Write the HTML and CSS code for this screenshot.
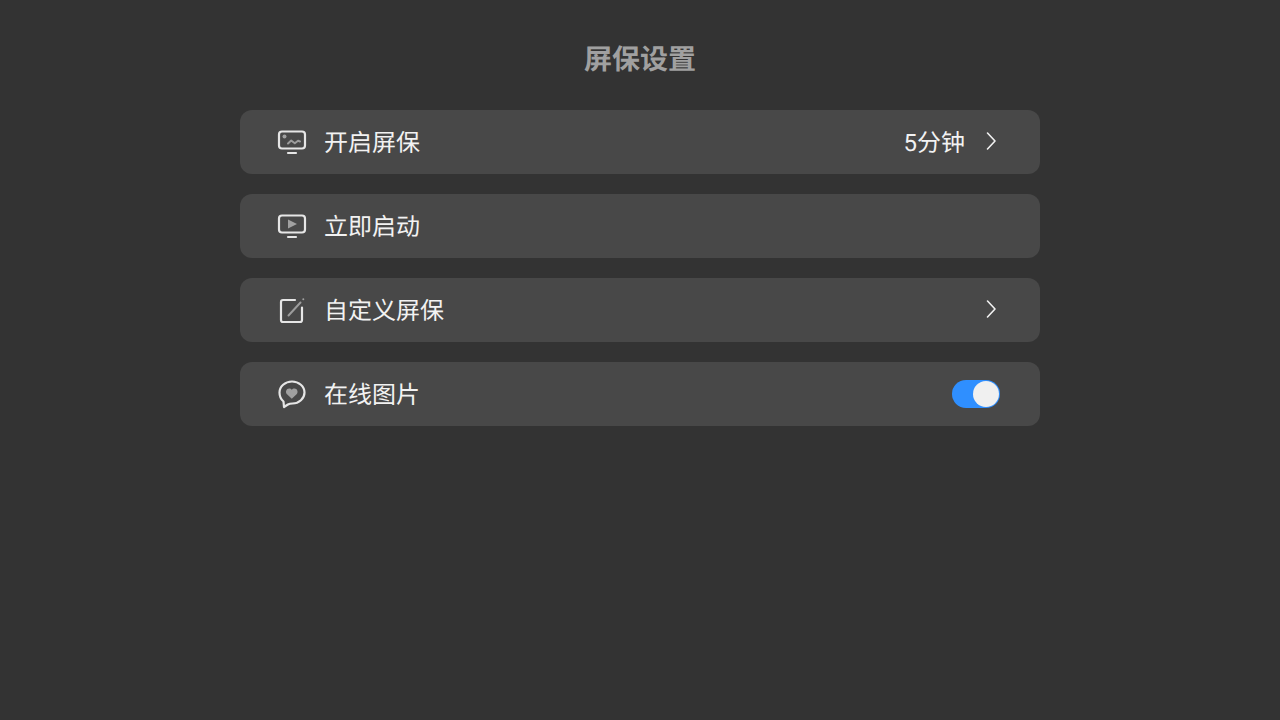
FILE: index.html
```html
<!DOCTYPE html>
<html lang="zh-CN">
<head>
<meta charset="utf-8">
<title>屏保设置</title>
<link rel="stylesheet" href="styles.css">
</head>
<body>
<main class="page">
  <h1 class="title">屏保设置</h1>
  <ul class="list">
    <li class="row">
      <svg class="icon" viewBox="0 0 32 32"><rect class="line" x="3" y="5.500" width="26" height="17" rx="3"/><path class="line" d="M12 27h8"/><circle class="fill" cx="8.500" cy="10.500" r="2"/><path class="dim" d="M12 17.500l3.200-3 3.600 2.800 3.200-2.500 2 .7"/></svg>
      <span class="label">开启屏保</span>
      <span class="value">5分钟</span>
      <svg class="chevron" viewBox="0 0 16 24"><path d="M3.500 4l7.500 8-7.500 8"/></svg>
    </li>
    <li class="row">
      <svg class="icon" viewBox="0 0 32 32"><rect class="line" x="3" y="5.500" width="26" height="17" rx="3"/><path class="line" d="M12 27h8"/><path class="fill" d="M12 9.500l9 4.500-9 4.500z"/></svg>
      <span class="label">立即启动</span>
    </li>
    <li class="row">
      <svg class="icon" viewBox="0 0 32 32"><path class="line" d="M19 6H7a2 2 0 0 0-2 2v18a2 2 0 0 0 2 2h17a2 2 0 0 0 2-2V13.500"/><path class="dim" d="M12.500 21.500l12-13"/><circle class="fill" cx="27.300" cy="5.300" r="1"/></svg>
      <span class="label">自定义屏保</span>
      <svg class="chevron" viewBox="0 0 16 24"><path d="M3.500 4l7.500 8-7.500 8"/></svg>
    </li>
    <li class="row">
      <svg class="icon" viewBox="0 0 32 32"><path class="line" d="M16 3.500c7 0 12.500 5 12.500 11S23 25.500 16.500 25.500c-1.800 0-3.200.2-4.600 1L8 29l-.5-5.500C4.800 21.300 3.500 18 3.500 14.500 3.500 8.500 9 3.500 16 3.500z"/><path class="fill" d="M15.800 20.800l-4.800-4.500c-2-2-.8-5.800 2.200-5.800 1.100 0 2 .5 2.600 1.300.6-.8 1.500-1.300 2.600-1.300 3 0 4.200 3.800 2.200 5.800z"/></svg>
      <span class="label">在线图片</span>
      <span class="switch"><span class="knob"></span></span>
    </li>
  </ul>
</main>
</body>
</html>
```
FILE: styles.css
```css
* { box-sizing: border-box; }
html, body { margin: 0; height: 100%; }
body {
  background: #333333;
  color: #f2f2f2;
  font-family: Roboto, "Noto Sans CJK SC", sans-serif;
  text-rendering: geometricPrecision;
}
.page {
  width: 800px;
  margin: 0 auto;
  padding-top: 40px;
}
.title {
  margin: 0 0 30px;
  height: 40px;
  line-height: 40px;
  font-size: 28px;
  font-weight: 700;
  text-align: center;
  color: #a0a0a0;
}
.list {
  list-style: none;
  margin: 0;
  padding: 0;
  display: flex;
  flex-direction: column;
  gap: 20px;
}
.row {
  display: flex;
  align-items: center;
  height: 64px;
  padding: 0 40px 0 36px;
  background: #484848;
  border-radius: 12px;
  font-size: 24px;
  line-height: 32px;
}
.icon { width: 32px; height: 32px; flex: none; margin-right: 16px; }
.label { flex: 1; padding-top: 2px; }
.value { margin-right: 19px; padding-top: 2px; }
.line, .dim { fill: none; stroke-linecap: round; stroke-linejoin: round; }
.line { stroke: #e6e6e6; stroke-width: 2.200; }
.dim { stroke: #9c9c9c; stroke-width: 2; }
.fill { fill: #a0a0a0; }
.chevron { width: 16px; height: 24px; flex: none; margin-top: -2px; }
.chevron path { fill: none; stroke: #f2f2f2; stroke-width: 1.600; stroke-linecap: round; stroke-linejoin: round; }
.switch {
  display: flex;
  justify-content: flex-end;
  align-items: center;
  width: 48px;
  height: 28px;
  background: #2f8fff;
  border-radius: 14px;
}
.knob {
  width: 26px;
  height: 26px;
  margin-right: 1px;
  background: #f0f0f0;
  border-radius: 50%;
}
```
